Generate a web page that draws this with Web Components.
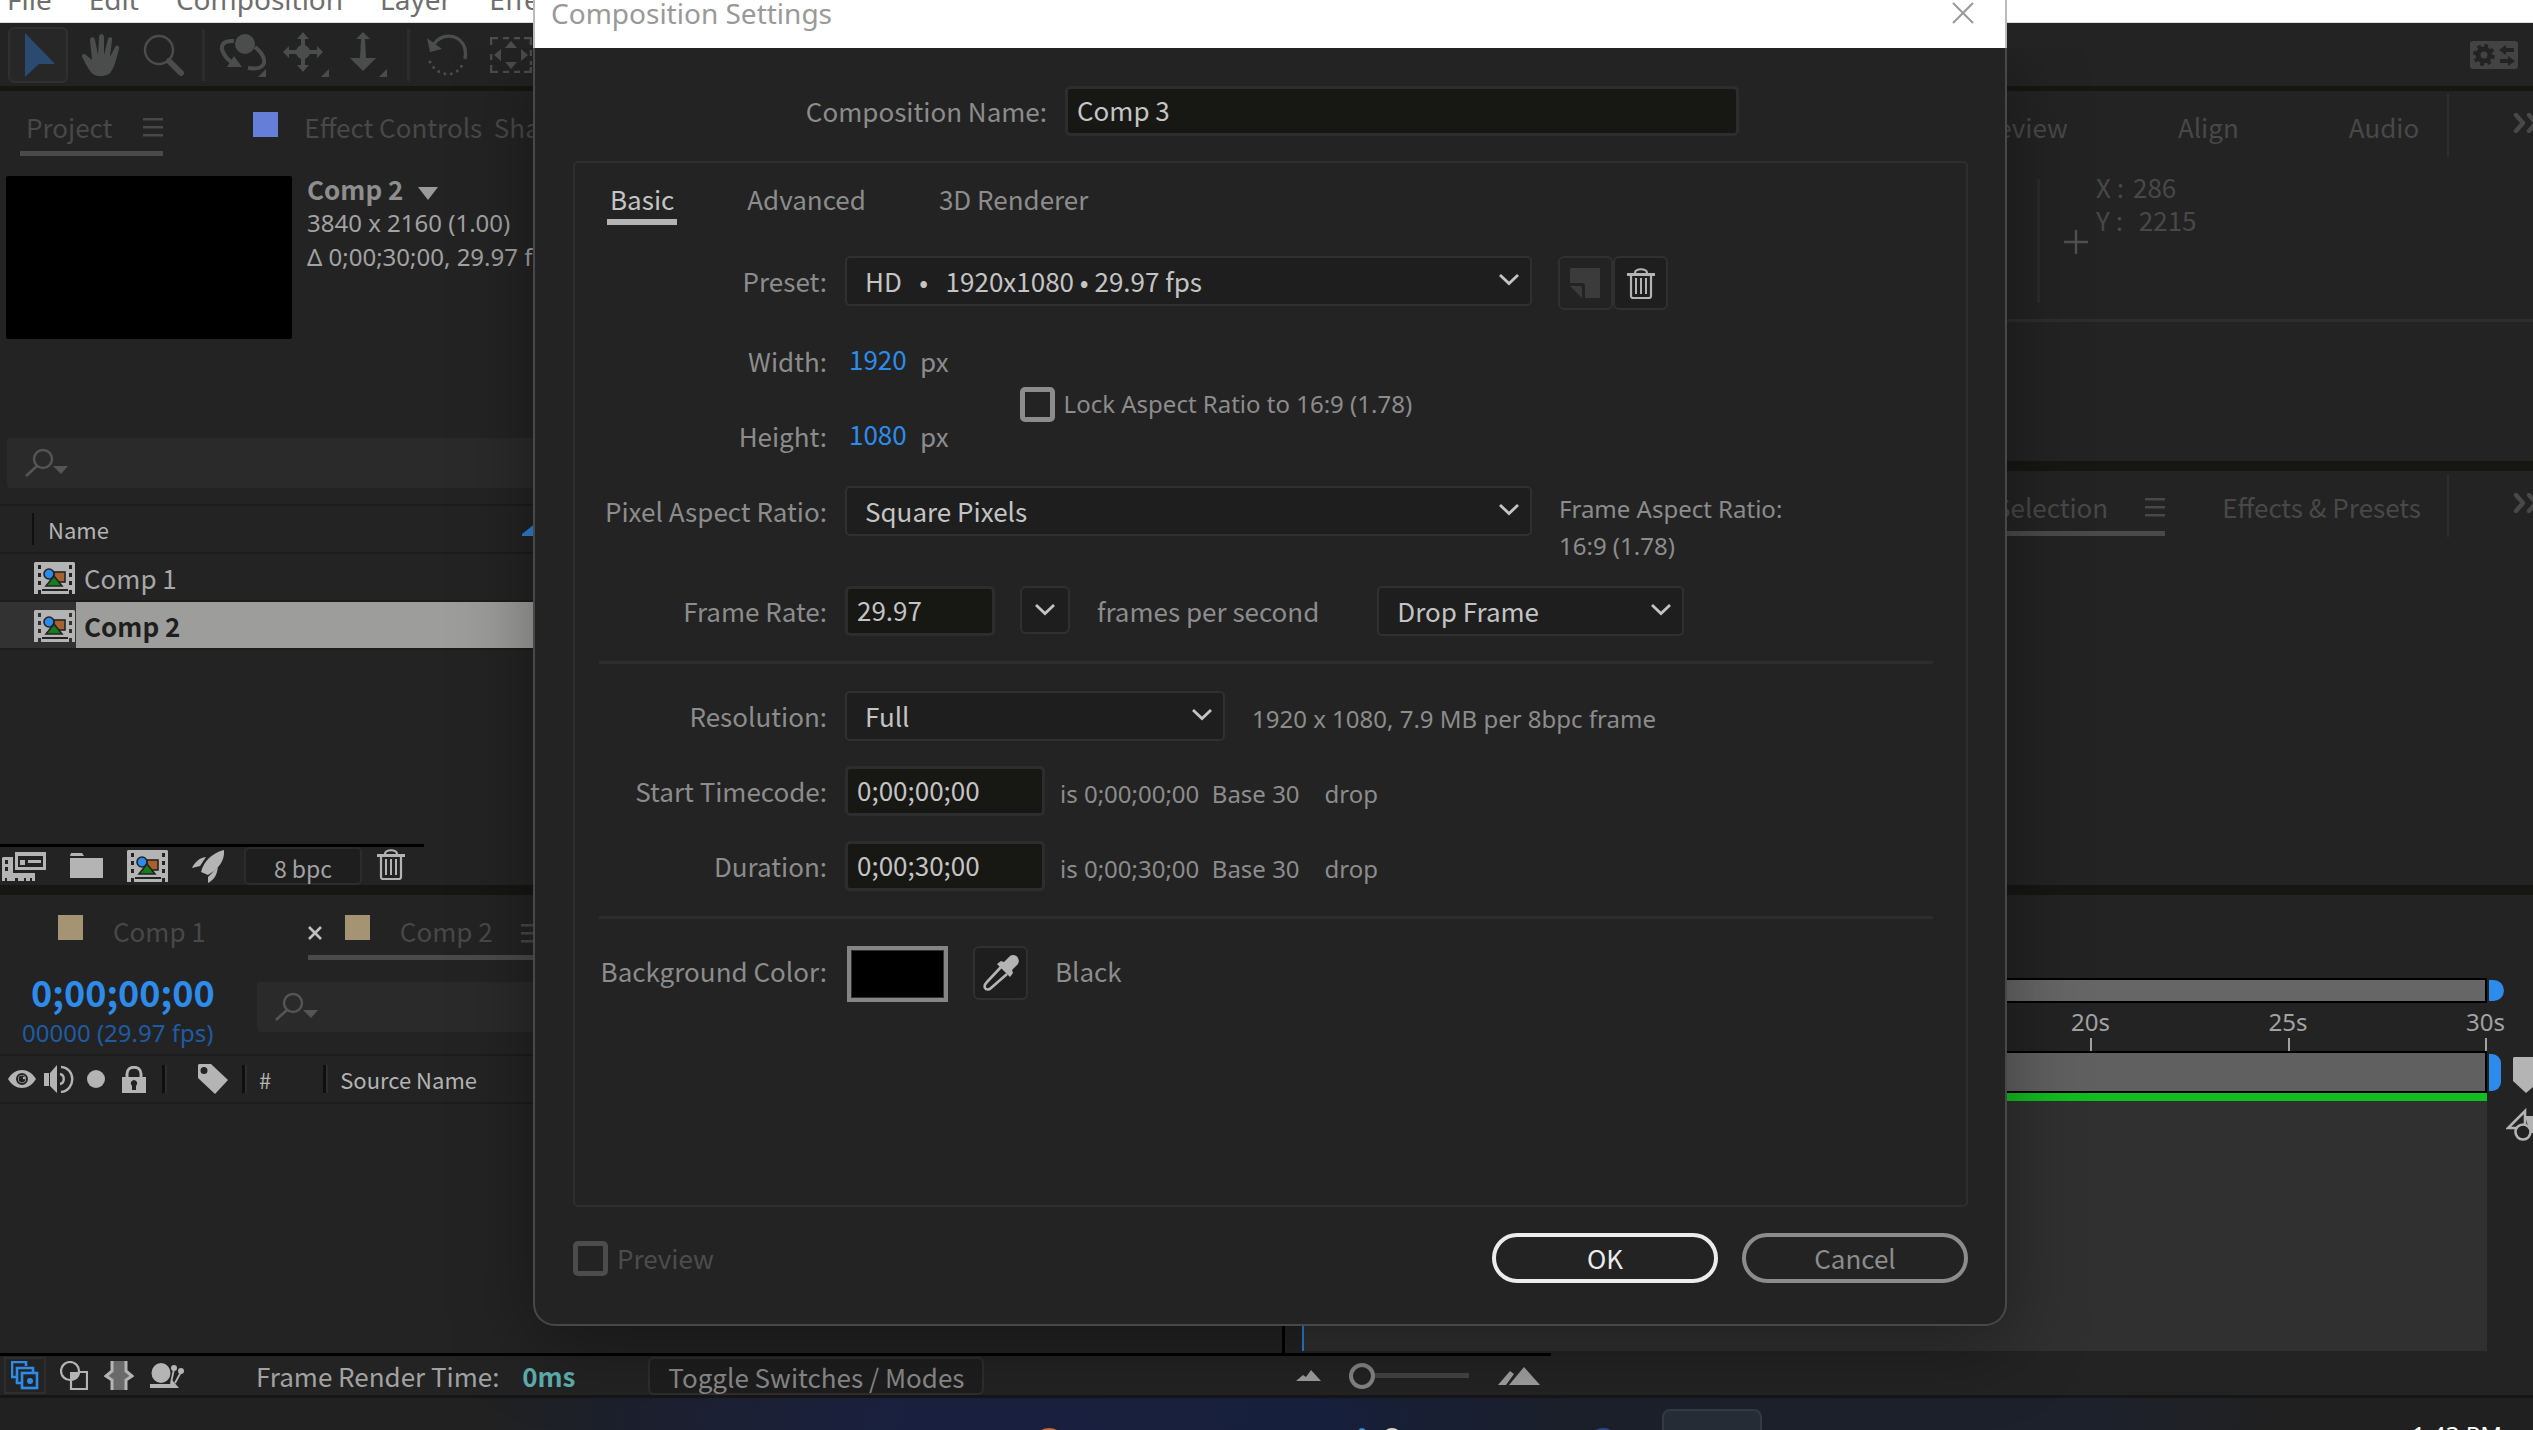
<!DOCTYPE html>
<html lang="en">
<head>
<meta charset="utf-8">
<title>Composition Settings</title>
<style>
  html, body { margin: 0; height: 100%; overflow: hidden; background: #232323; }
  body { font: 26px/40px "Noto Sans CJK JP", "Noto Sans", sans-serif; color: #8c8c8c; --small: "Noto Sans", sans-serif; }
</style>
</head>
<body>
<ae-app></ae-app>
<script>
const RESET = `
  *, *::before, *::after { box-sizing: border-box; }
  button, input, select { font: inherit; color: inherit; margin: 0; padding: 0; border: 0; background: none; border-radius: 0; appearance: none; outline: 0; }
  button { display: inline-flex; align-items: center; justify-content: center; }
`;
function component(name, css, html) {
  const t = document.createElement('template');
  t.innerHTML = `<style>${RESET}${css}</style>${html}`;
  customElements.define(name, class extends HTMLElement {
    constructor() {
      super();
      this.attachShadow({ mode: 'open' }).appendChild(t.content.cloneNode(true));
    }
  });
}

/* ---------- icons ---------- */
const filmComp = `
  <path fill="#b4b4b4" fill-rule="evenodd" d="M1 0H40L41 1V32H38V28H35V32H7V28H4V32H0V1zM4 3V7H7V3zM4 11V15H7V11zM4 19V23H7V19zM35 3V7H38V3zM35 11V15H38V11zM35 19V23H38V19z"/>
  <path fill="#232323" d="M8 27h26v2H8z"/>
  <rect x="20" y="10" width="11" height="10" fill="#a9602f" stroke="#232323" stroke-width="1.6"/>
  <circle cx="15" cy="12" r="5" fill="#2d8ceb" stroke="#232323" stroke-width="1.6"/>
  <path fill="#157d1d" stroke="#232323" stroke-width="1.6" d="M20 14l8 10H12z"/>`;
const ICONS = {
  arrow: [30, 44, `<path fill="#2a4a70" d="M0 0L30 31H14L0 44z"/>`],
  hand: [38, 42, `<path fill="currentColor" d="M11 40C7 37 4 30 0 23c-1-3 2-4 4-2l6 5L8 6c0-3 4-4 5 0l3 15L17 3c0-4 5-4 5 0v18L26 5c1-3 5-2 4 1l-2 17 5-10c2-3 5-1 4 2-3 10-4 18-9 24-4 4-13 4-17 1z"/>`],
  zoom: [42, 42, `<circle cx="16" cy="16" r="14" fill="none" stroke="currentColor" stroke-width="2.4"/><path d="M26 27L38 39" stroke="currentColor" stroke-width="6" stroke-linecap="round"/>`],
  orbit: [46, 44, `<circle cx="25" cy="11" r="10" fill="currentColor"/><path fill="none" stroke="currentColor" stroke-width="4" d="M14 8C3 7 0 13 3 19c2 5 5 8 10 11M35 14c8 6 11 14 8 18-2 3-8 4-15 3"/><path fill="currentColor" d="M14 23l8 11H7zM46 36v8h-8z"/>`],
  move: [46, 46, `<circle cx="20" cy="20" r="7" fill="currentColor"/><path fill="currentColor" d="M20 0l6 7h-4v26h4l-6 7-6-7h4V7h-4zM0 20l6-6v4h28v-4l6 6-6 6v-4H6v4zM46 37v8h-8z"/>`],
  dolly: [38, 46, `<path fill="currentColor" d="M13 0l7 7h-5l1 19h10L13 39 0 26h10l1-19H6zM37 37v8h-8z"/>`],
  rotate: [42, 42, `<path fill="none" stroke="currentColor" stroke-width="3.4" d="M7 10C14 0 29-1 36 10c3 5 3 9 2 15"/><path fill="currentColor" d="M0 4l3 14 12-3z"/><path fill="none" stroke="currentColor" stroke-width="3" stroke-linecap="round" stroke-dasharray="0 6.5" d="M3 28c8 16 29 16 33 0"/>`],
  region: [42, 36, `<path fill="none" stroke="currentColor" stroke-width="2.6" d="M1 8V1h7M13 1h6M24 1h6M34 1h7v7M41 13v6M41 24v4M41 30v5h-7M30 35h-6M19 35h-6M8 35H1v-7M1 23v-6"/><path fill="currentColor" d="M21 4l6 7H15zM21 32l6-7H15zM4 18l7-6v12zM38 18l-7-6v12z"/>`],
  sync: [48, 28, `<rect width="48" height="28" rx="3" fill="#434343"/><circle cx="14" cy="14" r="6" fill="none" stroke="#232323" stroke-width="5"/><circle cx="14" cy="14" r="9.4" fill="none" stroke="#232323" stroke-width="3" stroke-dasharray="3.7 3.7"/><path fill="#232323" d="M29 9l7-5v3h8v4h-8v3zM45 20l-7-5v3h-8v4h8v3z"/>`],
  menu: [20, 19, `<path fill="currentColor" d="M0 0h20v2.5H0zM0 8h20v2.5H0zM0 16h20v2.5H0z"/>`],
  more: [26, 20, `<path fill="none" stroke="currentColor" stroke-width="4.4" stroke-linecap="round" stroke-linejoin="round" d="M3 2l7 8-7 8M16 2l7 8-7 8"/>`],
  down: [20, 13, `<path fill="currentColor" d="M0 0h20L10 13z"/>`],
  search: [44, 30, `<circle cx="18" cy="11" r="9" fill="none" stroke="#555" stroke-width="2.4"/><path stroke="#555" stroke-width="2.6" d="M12 18L1 28"/><path fill="#555" d="M28 18h15l-7 8z"/>`],
  sort: [24, 14, `<path fill="#2d7fd6" d="M0 12L14 1l10 11v2H0z"/>`],
  comp: [41, 33, filmComp],
  footage: [44, 29, `<path fill="#b4b4b4" fill-rule="evenodd" d="M1 5h10v16h22v8h-3v-3h-2v3h-4v-3h-2v3h-6v-3h-3v3H5v-3H3v3H0V6zM3 8v4h3V8zM3 15v4h3v-4z"/><path fill="#b4b4b4" fill-rule="evenodd" d="M13 0h31v18H13zM16 4v11h25V4zM18 8h5v5h-5zM26 8h13v3H26z"/>`],
  folder: [33, 26, `<path fill="#b4b4b4" d="M1 0h11l2 3H0zM0 5h33v20H0z"/>`],
  rocket: [34, 33, `<path fill="#b4b4b4" d="M32 0c1 10-5 19-16 25l-7-3C12 11 20 3 32 0zM14 7C7 8 3 12 0 18l8-2zM26 17l-10 10v6c6-3 9-8 10-16z"/>`],
  trash: [28, 31, `<path fill="none" stroke="#b4b4b4" stroke-width="2.2" d="M8 5c0-5 12-5 12 0M4 8v20q0 2 2 2h16q2 0 2-2V8"/><path fill="#b4b4b4" d="M0 5h28v3H0zM8 10h2v16H8zM13 10h2v16h-2zM18 10h2v16h-2z"/>`],
  page: [31, 30, `<path fill="#3b3b3b" d="M1 0h29v30H15V18q0-3-3-3H0V1zM0 18h10q2 0 2 2v10z"/>`],
  eye: [28, 18, `<path fill="#b4b4b4" fill-rule="evenodd" d="M0 9C7-3 21-3 28 9 21 21 7 21 0 9zM14 3a6 6 0 100 12 6 6 0 100-12z"/><circle cx="14" cy="9" r="4" fill="#b4b4b4"/><circle cx="14" cy="9" r="3.4" fill="#232323"/><circle cx="16" cy="8" r="1.2" fill="#b4b4b4"/>`],
  speaker: [31, 28, `<path fill="#b4b4b4" d="M0 8h5v13H0zM6 8l7-8v28l-7-7z"/><path fill="none" stroke="#b4b4b4" stroke-width="2.4" d="M16 9c5 1 5 9 0 10M17 2c15 1 15 23 0 25"/>`],
  dot: [18, 18, `<circle cx="9" cy="9" r="9" fill="#b4b4b4"/>`],
  lock: [24, 27, `<path fill="none" stroke="#b4b4b4" stroke-width="3" d="M5 12V8c0-9 14-9 14 0v4"/><path fill="#b4b4b4" d="M0 11h24v16H0z"/><path fill="#232323" d="M12 14a3.4 3.4 0 012 6v4h-4v-4a3.4 3.4 0 012-6z"/>`],
  tag: [30, 30, `<path fill="#b4b4b4" fill-rule="evenodd" d="M1 0h12l17 16-13 14L0 14V1zM6 3a3.4 3.4 0 100 7 3.4 3.4 0 100-7z"/>`],
  frames: [28, 29, `<path fill="none" stroke="#2d8ceb" stroke-width="2.6" d="M5 16H1V1h14v4M10 22H6V7h16v4"/><rect x="11" y="12" width="15" height="15" fill="none" stroke="#2d8ceb" stroke-width="2.6"/><circle cx="19" cy="20" r="3" fill="#2d8ceb"/>`],
  modes: [28, 29, `<circle cx="10" cy="10" r="9" fill="none" stroke="#b4b4b4" stroke-width="2.2"/><path fill="none" stroke="#b4b4b4" stroke-width="2.2" d="M11 20v8h16V11h-7"/><path fill="#b4b4b4" d="M10 20V11h10c0 5-4 9-10 9z"/>`],
  braces: [30, 29, `<path fill="#6a6a6a" d="M8 0h14v10l5 5-5 4v10H8V19l-5-4 5-5z"/><path fill="none" stroke="#b4b4b4" stroke-width="3" d="M8 0v10l-6 5 6 4v10M22 0v10l6 5-6 4v10"/>`],
  snail: [34, 25, `<ellipse cx="11" cy="10" rx="9.5" ry="10" fill="#b4b4b4"/><path fill="#b4b4b4" d="M0 21h20l2-4 7 8H0z"/><path fill="none" stroke="#b4b4b4" stroke-width="1.8" d="M21 20l3-14M25 20l6-11"/><circle cx="24" cy="5" r="3" fill="#b4b4b4"/><circle cx="31" cy="8" r="3" fill="#b4b4b4"/>`],
  hillS: [25, 11, `<path fill="#a0a0a0" d="M0 11l7-6 3 2 5-7 10 11z"/>`],
  hillL: [42, 18, `<path fill="#a0a0a0" d="M0 18L12 4l4 3L8 18zM11 18L26 0l16 18z"/>`],
  chevron: [20, 12, `<path fill="none" stroke="#c4c4c4" stroke-width="2.8" d="M1 1l9 8.5L19 1"/>`],
  close: [22, 22, `<path stroke="#999" stroke-width="2" d="M1 1l20 20M21 1L1 21"/>`],
  tabclose: [14, 14, `<path stroke="#c0c0c0" stroke-width="2.6" d="M1 1l12 12M13 1L1 13"/>`],
  plus: [24, 24, `<path stroke="#505050" stroke-width="2.4" d="M12 0v24M0 12h24"/>`],
  dropper: [36, 37, `<path fill="none" stroke="#b4b4b4" stroke-width="2.6" d="M18 12L4 27c-2 2-3 4-2 6s4 2 6 0l16-14"/><path fill="#b4b4b4" d="M14 9l4-3 3 1 6-6c5-3 11 2 8 8l-6 6 1 3-3 4z"/>`],
  marker: [28, 36, `<path fill="#b4b4b4" d="M1 0h26v24L13 36 0 24V1z"/>`],
  graph: [40, 34, `<path fill="none" stroke="#b4b4b4" stroke-width="2.6" d="M19 16V3L2 20h9"/><path fill="#b4b4b4" d="M19 8h20v17H24z"/><circle cx="17" cy="24" r="7.5" fill="#232323" stroke="#b4b4b4" stroke-width="2.6"/>`]
};
customElements.define('ae-icon', class extends HTMLElement {
  constructor() { super(); this.attachShadow({ mode: 'open' }); }
  connectedCallback() {
    const [w, h, body] = ICONS[this.getAttribute('name')];
    this.shadowRoot.innerHTML = `<style>:host{display:inline-flex;flex:none}svg{display:block;flex:none}</style>
      <svg width="${w}" height="${h}" viewBox="0 0 ${w} ${h}" aria-hidden="true">${body}</svg>`;
  }
});

/* ---------- menu and tool bars ---------- */
component('menu-bar', `
  :host { display: flex; align-items: flex-end; gap: 37px; height: 23px; padding: 0 8px 11px 7px; overflow: hidden; background: #fff; border-bottom: 1px solid #ddd; font: 28px/24px "Noto Sans", sans-serif; color: #6e6e6e; }
`, `<span>File</span><span>Edit</span><span>Composition</span><span>Layer</span><span>Effect</span>`);

component('tool-bar', `
  :host { display: flex; align-items: center; gap: 3px; height: 63px; padding: 0 15px 0 8px; color: #4b4d4c; }
  button { width: 60px; height: 56px; border-radius: 6px; }
  button.on { border: 2px solid #303030; background: #272727; padding-left: 3px; }
  i { width: 3px; height: 52px; margin: 0 5px; background: #2c2c2c; }
  .sync { width: auto; margin-left: auto; }
`, `
  <button class="on" aria-label="Selection"><ae-icon name="arrow"></ae-icon></button>
  <button aria-label="Hand"><ae-icon name="hand"></ae-icon></button>
  <button aria-label="Zoom"><ae-icon name="zoom"></ae-icon></button><i></i>
  <button aria-label="Orbit"><ae-icon name="orbit"></ae-icon></button>
  <button aria-label="Pan"><ae-icon name="move"></ae-icon></button>
  <button aria-label="Dolly"><ae-icon name="dolly"></ae-icon></button><i></i>
  <button aria-label="Rotate"><ae-icon name="rotate"></ae-icon></button>
  <button aria-label="Anchor"><ae-icon name="region"></ae-icon></button>
  <button class="sync" aria-label="Sync settings"><ae-icon name="sync"></ae-icon></button>
`);

/* ---------- panel tab ---------- */
component('panel-tab', `
  :host { display: inline-flex; align-items: center; height: 44px; padding: 0 6px 9px; white-space: nowrap; color: #484848; border-bottom: 5px solid transparent; }
  :host([active]) { border-color: #4a4a4a; }
  :host([flush]) { padding-right: 0; }
`, `<slot></slot>`);

component('search-box', `
  :host { display: flex; align-items: center; height: 50px; padding-left: 18px; gap: 8px; background: #2a2a2a; border-radius: 4px; }
  input { flex: 1; min-width: 0; height: 100%; }
`, `<ae-icon name="search"></ae-icon><input type="search" aria-label="Search">`);

/* ---------- project panel ---------- */
component('project-panel', `
  :host { display: flex; flex-direction: column; }
  .tabs { display: flex; padding: 21px 0 0 20px; }
  .tabs ae-icon { margin-left: 31px; }
  .second { display: flex; gap: 20px; margin-left: 90px; }
  .sq { width: 25px; height: 25px; background: #657fd9; }
  .head { display: flex; gap: 15px; margin: 20px 6px 99px; }
  .thumb { width: 286px; height: 163px; background: #000; border-radius: 2px; }
  .meta { margin-top: -4px; font: 24px/34px var(--small); color: #a2a2a2; white-space: nowrap; }
  .meta b { font: 700 26px/34px "Noto Sans CJK JP", sans-serif; color: #8e8e8e; margin-right: 15px; }
  .meta div { height: 34px; }
  .meta ae-icon { color: #9a9a9a; }
  search-box { margin: 0 6px 16px 7px; }
  table { width: 100%; border-collapse: collapse; }
  th, td { height: 48px; padding: 0; text-align: left; border-top: 2px solid #1c1c1c; white-space: nowrap; }
  tbody tr:last-child td { border-bottom: 2px solid #1c1c1c; }
  th { font-size: 22px; font-weight: 400; line-height: 32px; color: #b4b4b4; }
  th:first-child { width: 76px; }
  .name { display: flex; align-items: center; justify-content: space-between; width: 514px; margin-left: -44px; padding-left: 14px; border-left: 2px solid #0f0f0f; }
  td:first-child { padding: 2px 0 0 34px; line-height: 0; }
  td:last-child { padding: 1px 0 0 8px; color: #a8a8a8; line-height: 44px; }
  .sel td:first-child { background: #323232; }
  .sel td:last-child { background: #9d9d9b; color: #1e1e1e; font-weight: 700; }
  .foot { display: flex; align-items: center; margin-top: auto; height: 41px; padding-left: 2px; border-top: 3px solid #000; width: 424px; }
  .foot button { flex: none; margin-right: 24px; }
  .foot .bpc { width: 118px; height: 38px; margin: 0 15px 0 -6px; padding-top: 4px; border: 2px solid #2c2c2c; border-radius: 5px; background: #1e1e1e; font-size: 23px; color: #a2a2a2; }
  .foot .bin { margin: 0 0 4px; }
`, `
  <div class="tabs">
    <panel-tab active flush>Project<ae-icon name="menu"></ae-icon></panel-tab>
    <div class="second"><div class="sq"></div><panel-tab flush>Effect Controls&nbsp; Shape Layer 1</panel-tab></div>
  </div>
  <div class="head"><div class="thumb"></div>
    <div class="meta"><div><b>Comp 2</b><ae-icon name="down"></ae-icon></div><div>3840 x 2160 (1.00)</div><div>Δ 0;00;30;00, 29.97 fps</div></div>
  </div>
  <search-box></search-box>
  <table>
    <thead><tr><th></th><th><div class="name">Name<ae-icon name="sort"></ae-icon></div></th></tr></thead>
    <tbody>
      <tr><td><ae-icon name="comp"></ae-icon></td><td>Comp 1</td></tr>
      <tr class="sel"><td><ae-icon name="comp"></ae-icon></td><td>Comp 2</td></tr>
    </tbody>
  </table>
  <div class="foot">
    <button aria-label="Interpret footage"><ae-icon name="footage"></ae-icon></button>
    <button aria-label="New folder"><ae-icon name="folder"></ae-icon></button>
    <button aria-label="New composition"><ae-icon name="comp"></ae-icon></button>
    <button aria-label="Project settings"><ae-icon name="rocket"></ae-icon></button>
    <button class="bpc">8 bpc</button>
    <button class="bin" aria-label="Delete"><ae-icon name="trash"></ae-icon></button>
  </div>
`);

/* ---------- right hand panels ---------- */
component('info-panel', `
  :host { display: flex; flex-direction: column; color: #484848; }
  .tabs { display: flex; align-items: flex-start; height: 68px; padding: 3px 0 0 25px; }
  .tabs panel-tab { margin: 18px 98px 0 0; }
  .tabs .last { margin-right: 0; }
  .more { display: flex; flex: none; align-items: center; height: 63px; width: 86px; margin-left: auto; padding: 0 0 6px 64px; border-left: 2px solid #2e2e2e; overflow: hidden; }
  .info { display: flex; height: 163px; padding: 11px 0 0 97px; border-bottom: 3px solid #2d2d2d; }
  .cross { height: 124px; margin-top: 9px; padding: 44px 8px 0 24px; border-left: 3px solid #2b2b2b; }
  dl { display: grid; grid-template-columns: 37px auto; grid-auto-rows: 33px; margin: 0; line-height: 33px; }
  dd { margin: 0; }
  .gap { height: 139px; }
  hr { width: 100%; height: 10px; margin: 0; border: 0; background: #161613; }
  .fx { padding-left: 49px; }
  .fx panel-tab { margin-right: 51px; }
  .fx ae-icon[name=menu] { margin-left: 37px; }
`, `
  <div class="tabs"><panel-tab>Preview</panel-tab><panel-tab>Align</panel-tab><panel-tab class="last">Audio</panel-tab><div class="more"><ae-icon name="more"></ae-icon></div></div>
  <div class="info"><div class="cross"><ae-icon name="plus"></ae-icon></div>
    <dl><dt>X :</dt><dd>286</dd><dt>Y :</dt><dd>&nbsp;2215</dd></dl></div>
  <div class="gap"></div>
  <hr>
  <div class="tabs fx"><panel-tab active flush>Selection<ae-icon name="menu"></ae-icon></panel-tab><panel-tab class="last">Effects &amp; Presets</panel-tab><div class="more"><ae-icon name="more"></ae-icon></div></div>
`);

/* ---------- timeline ---------- */
component('time-line', `
  :host { display: grid; grid-template-columns: 1285px minmax(0, 1fr) 46px; grid-template-rows: 458px 42px; }
  .left { border-right: 3px solid #000; }
  .tabs { display: flex; align-items: flex-start; padding: 20px 0 0 58px; }
  .sq { width: 25px; height: 25px; background: #a59473; margin-right: 24px; }
  .tabs panel-tab { margin-top: 1px; }
  .open { display: flex; margin-left: 96px; border-bottom: 5px solid #4a4a4a; height: 45px; }
  .open ae-icon[name=tabclose] { margin: 11px 23px 0 0; }
  .open .menu { margin: 9px 0 0 22px; color: #484848; }
  .top { display: flex; gap: 40px; height: 94px; padding: 10px 0 0 22px; }
  .code { width: 195px; white-space: nowrap; }
  .code b { display: block; padding-left: 9px; font-size: 36px; line-height: 42px; color: #2d8ceb; }
  .code span { display: block; padding-top: 6px; font: 24px/30px var(--small); color: #1f5ba3; }
  search-box { flex: 1; margin-top: 12px; }
  .cols { display: flex; align-items: center; height: 50px; padding-left: 8px; border: solid #1c1c1c; border-width: 2px 0; font-size: 22px; color: #b4b4b4; }
  .cols i { width: 5px; height: 28px; border: solid #2e2e2e; border-width: 0 2px 0 0; border-left: 3px solid #0f0f0f; }
  .right { display: flex; flex-direction: column; padding: 83px 0 2px 17px; }
  .bar { display: flex; margin-right: -19px; }
  .bar div { flex: 1; background: #666; border: solid #000; border-width: 2px 2px 2px 0; height: 25px; }
  .bar span { width: 15px; margin: 2px; border-radius: 0 12px 12px 0; background: #2d8ceb; }
  .bar.work div { height: 42px; background: #606060; }
  .bar.work span { width: 12px; border-radius: 0 9px 9px 0; margin: 3px 5px 2px 2px; }
  .ruler { display: flex; justify-content: flex-end; height: 48px; color: #a2a2a2; font: 24px/32px var(--small); }
  .ruler div { display: flex; flex-direction: column; align-items: flex-end; width: 16.667%; }
  .ruler span { margin: 3px -18px 0 0; }
  .ruler div::after { content: ""; width: 2px; height: 13px; background: #a2a2a2; }
  .green { height: 8px; background: #12bd20; }
  .track { flex: 1; background: #303030; border-left: 2px solid #2d7fd6; }
  .side { padding: 162px 0 0 2px; overflow: hidden; }
  .side ae-icon { display: flex; }
  .side ae-icon[name=marker] { margin: 0 0 15px 24px; }
  .side ae-icon[name=graph] { margin-left: 17px; }
  .status { grid-column: 1 / 4; display: flex; align-items: center; }
  .cap { display: flex; align-items: center; width: 1551px; height: 42px; border-top: 3px solid #000; }
  .cap > button { margin-right: 16px; }
  .cap > .first { width: 42px; height: 37px; margin: 0 14px 0 4px; border: 2px solid #2e2e2e; }
  .time { margin-left: 56px; color: #a2a2a2; white-space: pre; }
  .time b { margin-left: 11px; color: #5fb0b0; }
  .cap > .toggle { flex: none; height: 38px; margin: 0 312px 0 73px; padding-top: 3px; width: 336px; border: 2px solid #2e2e2e; border-radius: 6px; background: #1e1e1e; white-space: nowrap; color: #8c8c8c; }
  input[type=range] { flex: none; width: 120px; height: 26px; margin: 0 29px 0 28px; }
  input[type=range]::-webkit-slider-runnable-track { height: 5px; background: #444; }
  input[type=range]::-webkit-slider-thumb { appearance: none; width: 26px; height: 26px; margin-top: -10px; border: 4px solid #858585; border-radius: 50%; background: #232323; }
`, `
  <div class="left">
    <div class="tabs">
      <div class="sq"></div><panel-tab>Comp 1</panel-tab>
      <div class="open"><ae-icon name="tabclose"></ae-icon><div class="sq"></div><panel-tab>Comp 2</panel-tab><ae-icon class="menu" name="menu"></ae-icon></div>
    </div>
    <div class="top"><div class="code"><b>0;00;00;00</b><span>00000 (29.97 fps)</span></div><search-box></search-box></div>
    <div class="cols">
      <ae-icon name="eye"></ae-icon><ae-icon name="speaker" style="margin-left:8px"></ae-icon><ae-icon name="dot" style="margin-left:12px"></ae-icon><ae-icon name="lock" style="margin-left:17px"></ae-icon>
      <i style="margin:0 31px 0 16px"></i><ae-icon name="tag"></ae-icon><i style="margin:0 12px 0 14px"></i><span>#</span><i style="margin:0 12px 0 52px"></i><span>Source Name</span>
    </div>
  </div>
  <div class="right">
    <div class="bar"><div></div><span></span></div>
    <div class="ruler"><div><span>20s</span></div><div><span>25s</span></div><div><span>30s</span></div></div>
    <div class="bar work"><div></div><span></span></div>
    <div class="green"></div>
    <div class="track"></div>
  </div>
  <div class="side"><ae-icon name="marker"></ae-icon><ae-icon name="graph"></ae-icon></div>
  <div class="status"><div class="cap">
    <button class="first" aria-label="Layer switches"><ae-icon name="frames"></ae-icon></button>
    <button aria-label="Transfer controls"><ae-icon name="modes"></ae-icon></button>
    <button aria-label="In and out"><ae-icon name="braces"></ae-icon></button>
    <button aria-label="Render time"><ae-icon name="snail"></ae-icon></button>
    <span class="time">Frame Render Time:  <b>0ms</b></span>
    <button class="toggle">Toggle Switches / Modes</button>
    <ae-icon name="hillS"></ae-icon><input type="range" value="0" aria-label="Timeline zoom"><ae-icon name="hillL"></ae-icon>
  </div></div>
`);

/* ---------- taskbar ---------- */
component('task-bar', `
  :host { display: flex; justify-content: flex-end; height: 35px; overflow: hidden; border-top: 3px solid #161616; background: linear-gradient(90deg, #212121 19%, #1c202e 25%, #1a2140 36%, #17203d 52%, #1b202a 62%, #1d212c 82%, #202020 90%); }
  .apps { display: flex; align-items: flex-start; margin-right: 650px; }
  .apps i { border-radius: 50%; height: 20px; margin-top: 30px; width: 26px; }
  .tile { width: 100px; height: 40px; margin-top: 11px; border: 2px solid #353b45; border-radius: 8px; background: #272d37; }
  time { margin: 22px 31px 0 0; font: 24px/30px "Noto Sans", sans-serif; color: #fff; }
`, `
  <div class="apps"><i style="background:#c8683a;margin-right:294px"></i><i style="background:#3a8fd0;width:12px;margin-right:14px"></i><i style="background:#e8dcc4;width:20px;margin-right:188px"></i><i style="background:#274a8a;margin-right:46px"></i><div class="tile"></div></div>
  <time>1:43 PM</time>
`);

/* ---------- form pieces ---------- */
component('drop-down', `
  :host { display: inline-grid; flex: none; height: 50px; color: #c4c4c4; }
  ::slotted(select) { grid-area: 1 / 1; width: 100%; height: 50px; padding: 0 40px 0 18px !important; border: 2px solid #303030 !important; border-radius: 5px !important; background: #1e1e1e !important; color: #c4c4c4; }
  ae-icon { grid-area: 1 / 1; place-self: center end; margin: 0 13px 2px 0; pointer-events: none; z-index: 1; }
`, `<slot></slot><ae-icon name="chevron"></ae-icon>`);

component('field-row', `
  :host { display: flex; align-items: center; height: 50px; white-space: nowrap; }
  .label { width: var(--label, 228px); margin-right: 18px; text-align: right; flex: none; line-height: 50px; }
`, `<div class="label"><slot name="label"></slot></div><slot></slot>`);

component('comp-dialog', `
  :host { display: block; color: #8c8c8c; }
  header { display: flex; align-items: center; justify-content: space-between; height: 48px; padding: 0 31px 22px 16px; background: #fff; border: solid #bbb; border-width: 0 2px; font: 28px/26px "Noto Sans", sans-serif; color: #999; }
  .body { padding: 38px 37px 41px 38px; background: #232323; border: 2px solid #484848; border-top: 0; border-radius: 0 0 22px 22px; box-shadow: 0 20px 80px rgba(0,0,0,.35); clip-path: inset(0 -120px -120px -120px); }
  .name { --label: 474px; margin-bottom: 25px; }
  .box { height: 50px; flex: none; padding: 0 9px 4px; border: 3px solid #2d2d2d; border-radius: 5px; background: #171714; color: #c4c4c4; }
  .group { min-height: 1046px; padding: 16px 33px 16px 24px; border: 2px solid #2e2e2e; border-radius: 5px; }
  nav { display: flex; gap: 67px; padding-left: 8px; margin-bottom: 31px; }
  nav button { padding: 0 3px; border-bottom: 6px solid transparent; }
  nav button.on { color: #c4c4c4; border-color: #b4b4b4; }
  .sq { align-self: flex-start; width: 55px; height: 54px; border: 2px solid #303030; border-radius: 6px; flex: none; }
  .dark { background: #1e1e1e; }
  .size { display: flex; align-items: center; margin: 30px 0 25px; }
  .size field-row + field-row { margin-top: 25px; }
  .val { width: 64px; margin: 0 7px 4px 4px; color: #2d8ceb; }
  .check { display: flex; align-items: center; }
  .check input { width: 35px; height: 35px; margin-right: 9px; border: 5px solid #8c8c8c; border-radius: 5px; flex: none; }
  .lock { margin-left: 71px; padding-top: 11px; font: 24px/40px var(--small); }
  .note { font: 24px/56px var(--small); height: 50px; white-space: pre; }
  .far { line-height: 37px; height: 42px; }
  hr { height: 3px; margin: 25px 0 27px; border: 0; background: #2d2d2d; }
  .rate { margin-top: 50px; }
  .t { margin-bottom: 25px; }
  .color { align-self: flex-start; width: 101px; height: 56px; border: 4px solid #858585; background: #000; box-shadow: inset 0 0 0 1px #333; margin: 0 25px 0 2px; flex: none; }
  footer { display: flex; align-items: center; gap: 24px; padding-top: 26px; }
  footer .check { margin-right: auto; color: #4c4c4c; }
  footer .check input { border-color: #4c4c4c; }
  footer button { width: 226px; height: 50px; border: 4px solid #8c8c8c; border-radius: 25px; }
  footer .ok { border-color: #ececec; color: #ececec; }
`, `
  <header><span>Composition Settings</span><button aria-label="Close"><ae-icon name="close"></ae-icon></button></header>
  <div class="body">
    <field-row class="name"><label slot="label" for="nm">Composition Name:</label><input class="box" id="nm" value="Comp 3" style="width:674px"></field-row>
    <div class="group">
      <nav><button class="on">Basic</button><button>Advanced</button><button>3D Renderer</button></nav>
      <field-row><label slot="label" for="pre">Preset:</label><drop-down style="width:687px;margin-right:26px"><select id="pre"><option>HD&nbsp; &nbsp;•&nbsp; &nbsp;1920x1080 • 29.97 fps</option></select></drop-down>
        <button class="sq" aria-label="Save preset"><ae-icon name="page"></ae-icon></button><button class="sq dark" aria-label="Delete preset"><ae-icon name="trash"></ae-icon></button></field-row>
      <div class="size"><div>
        <field-row><label slot="label" for="w">Width:</label><input class="val" id="w" value="1920"><span>px</span></field-row>
        <field-row><label slot="label" for="h">Height:</label><input class="val" id="h" value="1080"><span>px</span></field-row></div>
        <label class="check lock"><input type="checkbox">Lock Aspect Ratio to 16:9 (1.78)</label>
      </div>
      <field-row><label slot="label" for="par">Pixel Aspect Ratio:</label><drop-down style="width:687px;margin-right:27px"><select id="par"><option>Square Pixels</option></select></drop-down><div class="note far">Frame Aspect Ratio:
16:9 (1.78)</div></field-row>
      <field-row class="rate"><label slot="label" for="fr">Frame Rate:</label><input class="box" id="fr" value="29.97" style="width:150px;margin-right:25px"><button class="sq dark" style="width:50px;height:48px" aria-label="Frame rate list"><ae-icon name="chevron"></ae-icon></button><label for="df" style="margin:0 58px 0 27px">frames per second</label><drop-down style="width:307px"><select id="df"><option>Drop Frame</option></select></drop-down></field-row>
      <hr>
      <field-row class="t"><label slot="label" for="res">Resolution:</label><drop-down style="width:380px;margin-right:27px"><select id="res"><option>Full</option></select></drop-down><span class="note">1920 x 1080, 7.9 MB per 8bpc frame</span></field-row>
      <field-row class="t"><label slot="label" for="st">Start Timecode:</label><input class="box" id="st" value="0;00;00;00" style="width:200px;margin-right:15px"><span class="note">is 0;00;00;00  Base 30    drop</span></field-row>
      <field-row><label slot="label" for="du">Duration:</label><input class="box" id="du" value="0;00;30;00" style="width:200px;margin-right:15px"><span class="note">is 0;00;30;00  Base 30    drop</span></field-row>
      <hr>
      <field-row><label slot="label" for="bg">Background Color:</label><button class="color" id="bg"></button><button class="sq dark" aria-label="Eyedropper" style="margin-right:27px"><ae-icon name="dropper"></ae-icon></button><span>Black</span></field-row>
    </div>
    <footer><label class="check"><input type="checkbox">Preview</label><button class="ok">OK</button><button>Cancel</button></footer>
  </div>
`);

/* ---------- application frame ---------- */
component('ae-app', `
  :host { display: flex; flex-direction: column; height: 100vh; min-height: 1430px; position: relative; overflow: hidden; }
  .rule { flex: none; height: 5px; background: #161613; }
  .rule.thick { height: 10px; }
  main { flex: 1; min-height: 0; display: flex; justify-content: space-between; }
  project-panel { width: 860px; }
  info-panel { width: 593px; }
  menu-bar, tool-bar, time-line, task-bar { flex: none; }
  comp-dialog { position: absolute; top: 0; left: 533px; width: 1474px; }
`, `
  <menu-bar></menu-bar><tool-bar></tool-bar><div class="rule"></div>
  <main><project-panel></project-panel><info-panel></info-panel></main>
  <div class="rule thick"></div>
  <time-line></time-line><task-bar></task-bar>
  <comp-dialog></comp-dialog>
`);
</script>
</body>
</html>
